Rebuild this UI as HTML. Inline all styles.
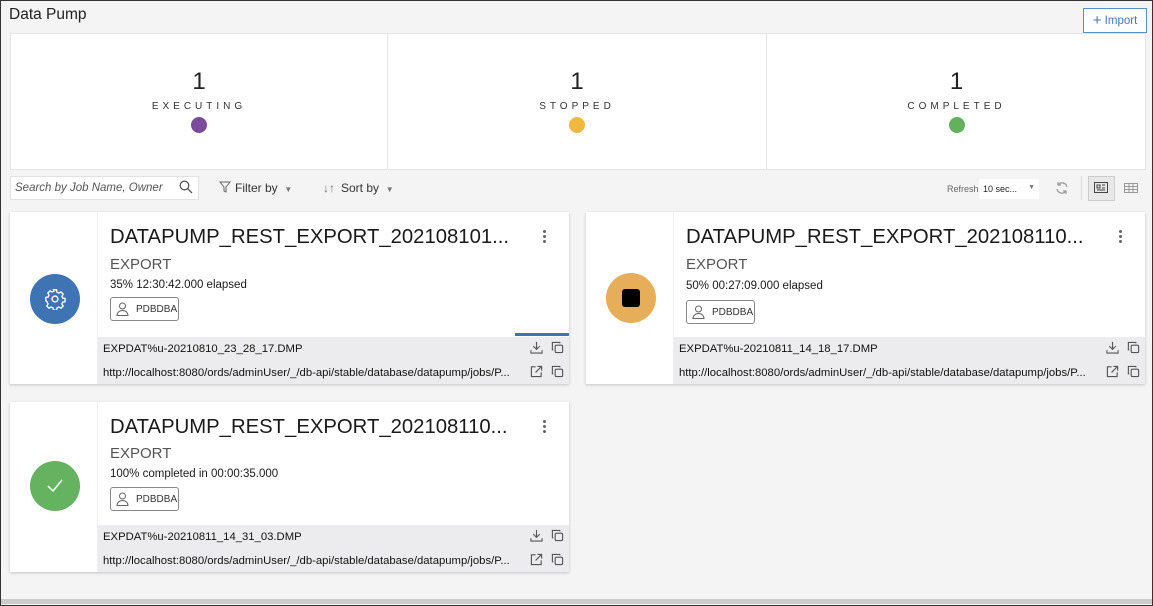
<!DOCTYPE html>
<html><head><style>
*{box-sizing:border-box;margin:0;padding:0}
html,body{width:1153px;height:606px}
body{background:#f4f4f4;font-family:"Liberation Sans",sans-serif;position:relative;overflow:hidden;color:#161513}
.frame{position:absolute;left:0;top:0;width:1153px;height:606px;border:1px solid #333;pointer-events:none}
.a{position:absolute}
.title{left:9px;top:6px;font-size:15.5px;color:#222}
.imp{left:1083px;top:8px;width:64px;height:25px;border:1px solid #5a8fc3;background:#fff;color:#3f7ab8;font-size:11.5px;line-height:23px;text-align:center}
.sum{left:10px;top:33px;width:1136px;height:137px;background:#fff;border:1px solid #e4e4e4}
.sec{position:absolute;top:0;height:135px;text-align:center}
.sec .n{position:absolute;left:0;right:0;top:34px;font-size:24px;color:#222}
.sec .l{position:absolute;left:0;right:0;top:67px;font-size:10px;letter-spacing:4px;color:#333}
.sec .d{position:absolute;left:50%;top:83px;width:16px;height:16px;margin-left:-8px;border-radius:50%}
.search{left:10px;top:176px;width:189px;height:24px;background:#fff;border:1px solid #e2e2e2;font-size:11.5px;font-style:italic;color:#555;padding:5px 4px}
.tb{font-size:12px;color:#333;top:181px}
.card{position:absolute;background:#fff;box-shadow:0 1px 3px rgba(0,0,0,.2)}
.card .side{position:absolute;left:0;top:0;width:88px;bottom:0;border-right:1px solid #eee}
.card .ic{position:absolute;left:20px;width:50px;height:50px;border-radius:50%}
.card h2{position:absolute;left:100px;top:14px;font-size:20.3px;font-weight:normal;color:#1a1a1a;white-space:nowrap}
.card .ty{position:absolute;left:100px;font-size:15px;color:#555}
.card .pr{position:absolute;left:100px;font-size:11.5px;color:#1a1a1a}
.card .bd{position:absolute;left:100px;width:69px;height:24px;border:1px solid #888;border-radius:3px;font-size:10px;color:#333;padding:6px 0 0 25px}
.card .ft{position:absolute;left:88px;right:0;bottom:0;height:47px;background:#ececee;font-size:11.3px;color:#111}
.card .ft div{position:absolute;left:5px}
.dots{position:absolute;top:18px;width:3px}
.dots i{display:block;width:3px;height:3px;border-radius:50%;background:#666;margin-bottom:2px}
svg.i{position:absolute}
</style></head><body>
<div class="a title">Data Pump</div>
<div class="a imp"><span style="font-size:15px;vertical-align:-1px">+</span> Import</div>
<div class="a sum">
 <div class="sec" style="left:0;width:377px;border-right:1px solid #e4e4e4"><div class="n">1</div><div class="l">EXECUTING</div><div class="d" style="background:#7b4a9a"></div></div>
 <div class="sec" style="left:377px;width:379px;border-right:1px solid #e4e4e4"><div class="n">1</div><div class="l">STOPPED</div><div class="d" style="background:#f0b93d"></div></div>
 <div class="sec" style="left:756px;width:379px"><div class="n">1</div><div class="l">COMPLETED</div><div class="d" style="background:#63b15d"></div></div>
</div>
<div class="a search">Search by Job Name, Owner</div>
<svg class="i" style="left:179px;top:180px" width="14" height="14" viewBox="0 0 14 14" fill="none" stroke="#555" stroke-width="1.3"><circle cx="5.5" cy="5.5" r="4.3"/><path d="M8.7 8.7L13 13"/></svg>
<svg class="i" style="left:219px;top:181px" width="12" height="12" viewBox="0 0 12 12" fill="none" stroke="#666"><path d="M1 1h10L7 6v5L5 10V6z"/></svg>
<div class="a tb" style="left:235px">Filter by &nbsp;<span style="font-size:8px;color:#777">▼</span></div>
<div class="a tb" style="left:323px;color:#777">↓↑</div>
<div class="a tb" style="left:341px">Sort by &nbsp;<span style="font-size:8px;color:#777">▼</span></div>
<div class="a" style="left:947px;top:184px;font-size:9px;color:#666">Refresh</div>
<div class="a" style="left:979px;top:179px;width:60px;height:20px;background:#fff;font-size:9px;color:#222;padding:5px 4px">10 sec... <span style="float:right;font-size:7px;color:#777">▼</span></div>
<svg class="i" style="left:1055px;top:181px" width="14" height="14" viewBox="0 0 14 14" fill="none" stroke="#999" stroke-width="1.2"><path d="M12 6A5 5 0 0 0 3 4M2 8a5 5 0 0 0 9 2M3 1v3h3M11 13v-3H8"/></svg>
<div class="a" style="left:1081px;top:176px;width:1px;height:24px;background:#ddd"></div>
<div class="a" style="left:1088px;top:176px;width:27px;height:25px;background:#e8e8e8;border:1px solid #ccc"></div>
<svg class="i" style="left:1094px;top:182px" width="14" height="11" viewBox="0 0 14 11" fill="none" stroke="#444"><rect x=".5" y=".5" width="13" height="10"/><path d="M3 3h3v3H3zM8 3h3M8 6h3M3 8h8"/></svg>
<svg class="i" style="left:1124px;top:183px" width="14" height="10" viewBox="0 0 14 10" fill="none" stroke="#999"><rect x=".5" y=".5" width="13" height="9"/><path d="M.5 3.5h13M.5 6.5h13M5 .5v9M9 .5v9"/></svg>

<svg width="0" height="0" style="position:absolute"><defs>
<symbol id="dl" viewBox="0 0 14 14"><path d="M7 1v8M3.5 5.5L7 9l3.5-3.5M1 10v3h12v-3" fill="none" stroke="#555" stroke-width="1.2"/></symbol>
<symbol id="cp" viewBox="0 0 14 14"><g fill="none" stroke="#555" stroke-width="1.2"><rect x="4.5" y="4.5" width="8" height="8" rx="1.5"/><path d="M9.5 2.5V1.5H1.5v8h1"/></g></symbol>
<symbol id="ex" viewBox="0 0 14 14"><path d="M6 2H1.5v10.5H12V8M8 1.5h4.5V6M12.5 1.5L6 8" fill="none" stroke="#555" stroke-width="1.2"/></symbol>
<symbol id="us" viewBox="0 0 13 14"><g fill="none" stroke="#666"><circle cx="6.5" cy="4" r="3"/><path d="M1 13.5c0-3 2.5-5 5.5-5s5.5 2 5.5 5z"/></g></symbol>
</defs></svg>

<div class="card" style="left:10px;top:212px;width:559px;height:172px">
 <div class="side"><div class="ic" style="top:62px;background:#3e74b3"></div></div>
 <svg class="i" style="left:34px;top:76px" width="22" height="22" viewBox="0 0 24 24" fill="none" stroke="#fff" stroke-width="1.5"><circle cx="12" cy="12" r="3.2"/><path d="M10.3 2h3.4l.5 2.6 2 1 2.3-1.3 2.4 2.4-1.3 2.3.9 2 2.5.5v3.4l-2.6.5-.9 2 1.4 2.3-2.4 2.4-2.3-1.4-2 .9-.5 2.6h-3.4l-.5-2.6-2-.9-2.3 1.4-2.4-2.4 1.3-2.3-.9-2L2 13.7v-3.4l2.6-.5.9-2-1.3-2.3 2.4-2.4 2.3 1.3 2-1z"/></svg>
 <h2>DATAPUMP_REST_EXPORT_202108101...</h2>
 <div class="dots" style="left:533px"><i></i><i></i><i></i></div>
 <div class="ty" style="top:44px">EXPORT</div>
 <div class="pr" style="top:67px">35% 12:30:42.000 elapsed</div>
 <div class="bd" style="top:85px">PDBDBA</div>
 <svg class="i" style="left:106px;top:90px" width="13" height="14"><use href="#us"/></svg>
 <div class="a" style="left:505px;top:121px;width:54px;height:3px;background:#3e74b3"></div>
 <div class="ft"><div style="top:6px">EXPDAT%u-20210810_23_28_17.DMP</div><div style="top:30px">http://localhost:8080/ords/adminUser/_/db-api/stable/database/datapump/jobs/P...</div></div>
 <svg class="i" style="left:520px;top:129px" width="13" height="13"><use href="#dl"/></svg>
 <svg class="i" style="left:541px;top:129px" width="13" height="13"><use href="#cp"/></svg>
 <svg class="i" style="left:520px;top:153px" width="13" height="13"><use href="#ex"/></svg>
 <svg class="i" style="left:541px;top:153px" width="13" height="13"><use href="#cp"/></svg>
</div>

<div class="card" style="left:586px;top:212px;width:559px;height:172px">
 <div class="side"><div class="ic" style="top:61px;background:#e7ae5a"></div></div>
 <div class="a" style="left:36px;top:77px;width:18px;height:18px;background:#000;border-radius:3px"></div>
 <h2>DATAPUMP_REST_EXPORT_202108110...</h2>
 <div class="dots" style="left:533px"><i></i><i></i><i></i></div>
 <div class="ty" style="top:44px">EXPORT</div>
 <div class="pr" style="top:68px">50% 00:27:09.000 elapsed</div>
 <div class="bd" style="top:88px">PDBDBA</div>
 <svg class="i" style="left:106px;top:93px" width="13" height="14"><use href="#us"/></svg>
 <div class="ft"><div style="top:6px">EXPDAT%u-20210811_14_18_17.DMP</div><div style="top:30px">http://localhost:8080/ords/adminUser/_/db-api/stable/database/datapump/jobs/P...</div></div>
 <svg class="i" style="left:520px;top:129px" width="13" height="13"><use href="#dl"/></svg>
 <svg class="i" style="left:541px;top:129px" width="13" height="13"><use href="#cp"/></svg>
 <svg class="i" style="left:520px;top:153px" width="13" height="13"><use href="#ex"/></svg>
 <svg class="i" style="left:541px;top:153px" width="13" height="13"><use href="#cp"/></svg>
</div>

<div class="card" style="left:10px;top:402px;width:559px;height:170px">
 <div class="side"><div class="ic" style="top:59px;background:#65b360"></div></div>
 <svg class="i" style="left:37px;top:77px" width="16" height="14" viewBox="0 0 16 14" fill="none" stroke="#fff" stroke-width="1.5"><path d="M1 7l5 5L15 1"/></svg>
 <h2>DATAPUMP_REST_EXPORT_202108110...</h2>
 <div class="dots" style="left:533px"><i></i><i></i><i></i></div>
 <div class="ty" style="top:43px">EXPORT</div>
 <div class="pr" style="top:66px">100% completed in 00:00:35.000</div>
 <div class="bd" style="top:85px">PDBDBA</div>
 <svg class="i" style="left:106px;top:90px" width="13" height="14"><use href="#us"/></svg>
 <div class="ft"><div style="top:6px">EXPDAT%u-20210811_14_31_03.DMP</div><div style="top:30px">http://localhost:8080/ords/adminUser/_/db-api/stable/database/datapump/jobs/P...</div></div>
 <svg class="i" style="left:520px;top:127px" width="13" height="13"><use href="#dl"/></svg>
 <svg class="i" style="left:541px;top:127px" width="13" height="13"><use href="#cp"/></svg>
 <svg class="i" style="left:520px;top:151px" width="13" height="13"><use href="#ex"/></svg>
 <svg class="i" style="left:541px;top:151px" width="13" height="13"><use href="#cp"/></svg>
</div>
<div class="a" style="left:0;top:599px;width:1153px;height:5px;background:#ccc"></div>
<div class="frame"></div>
</body></html>
